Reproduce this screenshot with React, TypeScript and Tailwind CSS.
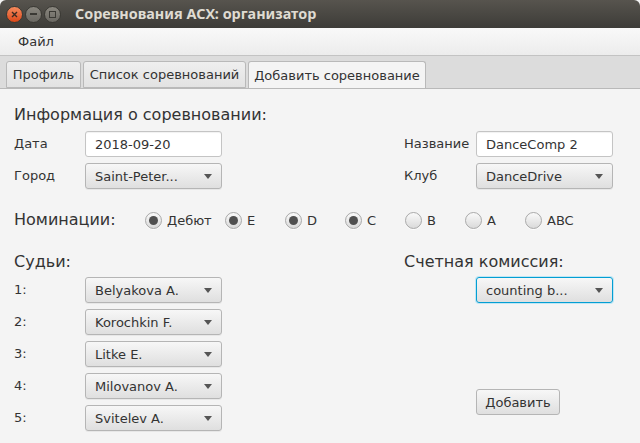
const Arrow = () => (
  <svg width="8" height="5" viewBox="0 0 8 5" className="shrink-0">
    <path d="M0 0 L8 0 L4 5 Z" fill="#555" />
  </svg>
);

const Combo = ({ value, focused = false }: { value: string; focused?: boolean }) => (
  <div
    className={
      focused
        ? 'flex items-center justify-between w-[137px] h-[26px] pl-[9px] pr-[9px] rounded-[3px] border border-[#039ed3] shadow-[0_0_0_1px_#bfe6f4] bg-gradient-to-b from-[#f7f7f7] to-[#dfdfdf]'
        : 'flex items-center justify-between w-[137px] h-[26px] pl-[9px] pr-[9px] rounded-[3px] border border-[#b5b5b5] bg-gradient-to-b from-[#f7f7f7] to-[#dfdfdf] shadow-[0_1px_0_rgba(0,0,0,0.05)]'
    }
  >
    <span className="text-[13px] text-[#333] leading-none">{value}</span>
    <Arrow />
  </div>
);

const TextField = ({ value }: { value: string }) => (
  <div className="flex items-center w-[137px] h-[26px] pl-[9px] rounded-[3px] border border-[#c4c4c4] bg-white shadow-[inset_0_1px_1px_rgba(0,0,0,0.06)]">
    <span className="text-[13px] text-[#333] leading-none">{value}</span>
  </div>
);

const Radio = ({ label, checked, first }: { label: string; checked: boolean; first: boolean }) => (
  <div className={first ? 'flex items-center w-[80px] shrink-0 gap-[5px]' : 'flex items-center w-[60px] shrink-0 gap-[5px]'}>
    <div className="flex items-center justify-center shrink-0 w-[17px] h-[17px] rounded-full border border-[#a9a9a9] bg-gradient-to-b from-[#fafafa] to-[#dadada] shadow-[0_1px_0_rgba(255,255,255,0.8)]">
      {checked && <div className="w-[9px] h-[9px] rounded-full bg-[#505050]" />}
    </div>
    <span className="text-[13px] text-[#333] leading-none">{label}</span>
  </div>
);

const Tab = ({ label, width, active = false }: { label: string; width: string; active?: boolean }) => (
  <div
    className={
      active
        ? `flex items-center justify-center h-[27px] ${width} rounded-t-[3px] border border-b-0 border-[#b9b9b9] bg-[#f4f4f4]`
        : `flex items-center justify-center h-[27px] ${width} rounded-t-[3px] border border-[#b9b9b9] bg-gradient-to-b from-[#efefef] to-[#e2e2e2]`
    }
  >
    <span className="text-[13px] text-[#333] leading-none whitespace-nowrap">{label}</span>
  </div>
);

const judges = ['Belyakova A.', 'Korochkin F.', 'Litke E.', 'Milovanov A.', 'Svitelev A.'];

const nominations = [
  { label: 'Дебют', checked: true },
  { label: 'E', checked: true },
  { label: 'D', checked: true },
  { label: 'C', checked: true },
  { label: 'B', checked: false },
  { label: 'A', checked: false },
  { label: 'ABC', checked: false },
];

export default function App() {
  return (
    <div className="w-[640px] h-[443px] flex flex-col bg-[#f4f4f4] overflow-hidden font-['DejaVu_Sans',sans-serif] text-[#333]">
      {/* Title bar */}
      <div className="flex items-center h-[28px] shrink-0 rounded-t-[6px] bg-gradient-to-b from-[#57544e] to-[#3d3c38]">
        <div className="flex items-center gap-[2px] pl-[6px]">
          <div className="flex items-center justify-center w-[17px] h-[17px] rounded-full bg-gradient-to-b from-[#f58a5c] to-[#dc4613] border border-[#3a3934]">
            <svg width="7" height="7" viewBox="0 0 7 7">
              <path d="M1 1 L6 6 M6 1 L1 6" stroke="#3b2a22" strokeWidth="1.4" />
            </svg>
          </div>
          <div className="flex items-center justify-center w-[17px] h-[17px] rounded-full bg-gradient-to-b from-[#8a877f] to-[#6a6862] border border-[#3a3934]">
            <div className="w-[7px] h-[2px] bg-[#3a3934]" />
          </div>
          <div className="flex items-center justify-center w-[17px] h-[17px] rounded-full bg-gradient-to-b from-[#8a877f] to-[#6a6862] border border-[#3a3934]">
            <div className="w-[7px] h-[7px] border-[1.5px] border-[#3a3934]" />
          </div>
        </div>
        <span className="ml-[14px] text-[14.4px] font-bold text-[#dfdbd2] font-['Noto_Sans',sans-serif]">
          Соревнования АСХ: организатор
        </span>
      </div>

      {/* Menu bar */}
      <div className="flex items-center h-[28px] shrink-0 pl-[18px] bg-gradient-to-b from-[#f9f9f9] to-[#ececec] border-b border-[#c3c3c3]">
        <span className="text-[13px] text-[#333]">Файл</span>
      </div>

      {/* Tab header */}
      <div className="flex items-end gap-[2px] h-[33px] shrink-0 pl-[6px] bg-[#dcdcdc] border-b border-[#b9b9b9]">
        <Tab label="Профиль" width="w-[75px]" />
        <Tab label="Список соревнований" width="w-[163px]" />
        <Tab label="Добавить соревнование" width="w-[178px]" active />
      </div>

      {/* Content */}
      <div className="flex flex-col px-[14px] pt-[16px]">
        <div className="h-[20px] flex items-center text-[16px]">Информация о соревновании:</div>

        <div className="flex mt-[6px] h-[26px] items-center">
          <div className="flex items-center w-[390px]">
            <span className="w-[71px] text-[13px]">Дата</span>
            <TextField value="2018-09-20" />
          </div>
          <div className="flex items-center">
            <span className="w-[72px] text-[13px]">Название</span>
            <TextField value="DanceComp 2" />
          </div>
        </div>

        <div className="flex mt-[6px] h-[26px] items-center">
          <div className="flex items-center w-[390px]">
            <span className="w-[71px] text-[13px]">Город</span>
            <Combo value="Saint-Peter..." />
          </div>
          <div className="flex items-center">
            <span className="w-[72px] text-[13px]">Клуб</span>
            <Combo value="DanceDrive" />
          </div>
        </div>

        <div className="flex items-center mt-[21px] h-[20px]">
          <span className="w-[131px] shrink-0 text-[16px]">Номинации:</span>
          {nominations.map((n, i) => (
            <Radio key={n.label} label={n.label} checked={n.checked} first={i === 0} />
          ))}
        </div>

        <div className="flex mt-[22px]">
          <div className="flex flex-col w-[390px]">
            <div className="h-[20px] flex items-center text-[16px]">Судьи:</div>
            <div className="flex flex-col gap-[6px] mt-[5px]">
              {judges.map((j, i) => (
                <div key={j} className="flex items-center h-[26px]">
                  <span className="w-[71px] text-[13px]">{i + 1}:</span>
                  <Combo value={j} />
                </div>
              ))}
            </div>
          </div>
          <div className="flex flex-col">
            <div className="h-[20px] flex items-center text-[16px]">Счетная комиссия:</div>
            <div className="mt-[5px] ml-[72px]">
              <Combo value="counting b..." focused />
            </div>
            <div className="mt-[86px] ml-[72px]">
              <div className="flex items-center justify-center w-[84px] h-[26px] rounded-[3px] border border-[#b5b5b5] bg-gradient-to-b from-[#f7f7f7] to-[#dfdfdf]">
                <span className="text-[13px] text-[#333] leading-none">Добавить</span>
              </div>
            </div>
          </div>
        </div>
      </div>
    </div>
  );
}
